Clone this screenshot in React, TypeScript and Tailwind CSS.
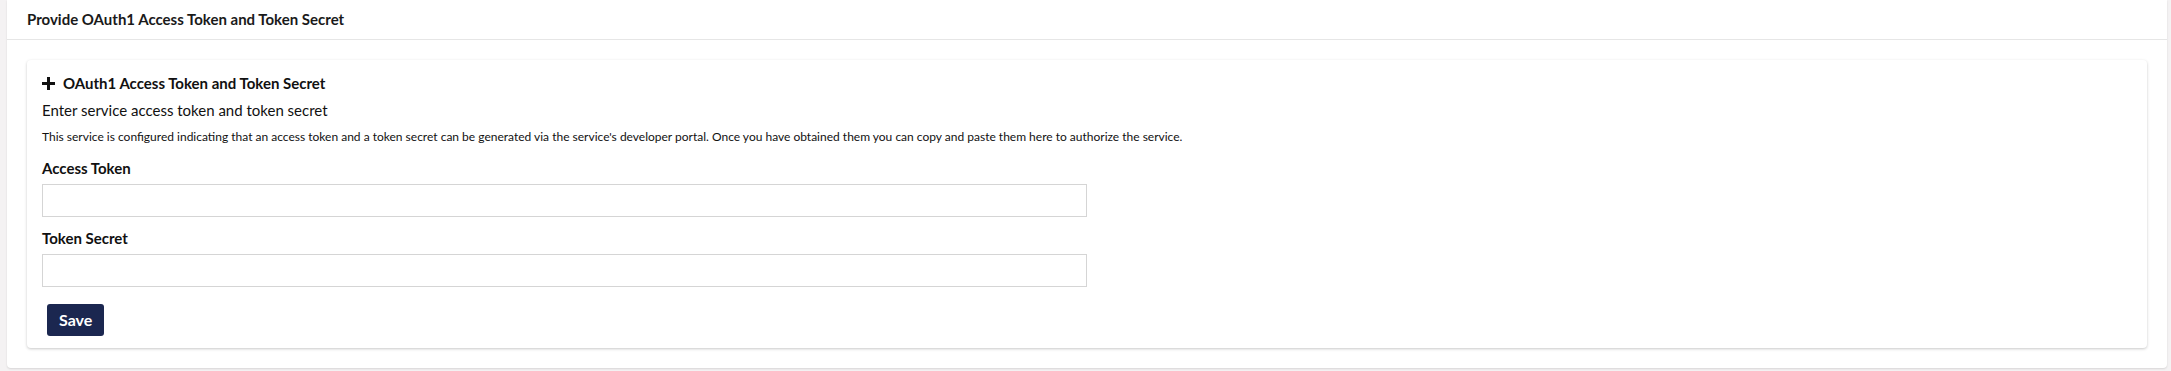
import React from "react";

export default function App() {
  return (
    <div className="min-h-[371px] w-full bg-[#f4f2f3] pl-[7px] pr-[4px] pb-[3px] font-['Lato','Noto_Sans',sans-serif] text-[#111]">
      <div className="bg-white rounded-b-[4px] shadow-[0_1px_2px_rgba(0,0,0,0.12)] min-h-[368px]">
        <div className="h-[40px] border-b border-[#e6e6e6] px-[20px] flex items-center">
          <h1 className="text-[15px] font-bold text-[#1a1a1a]">Provide OAuth1 Access Token and Token Secret</h1>
        </div>
        <div className="px-[20px] pt-[20px] pb-[20px]">
          <div className="rounded-[4px] bg-white shadow-[0_1px_3px_rgba(0,0,0,0.22)] px-[15px] pt-[12px] pb-[12px]">
            <div className="flex items-center gap-[8px] h-[22px]">
              <svg width="13" height="13" viewBox="0 0 13 13" className="shrink-0">
                <rect x="5" y="0" width="3" height="13" fill="#111" />
                <rect x="0" y="5" width="13" height="3" fill="#111" />
              </svg>
              <span className="text-[15px] font-bold">OAuth1 Access Token and Token Secret</span>
            </div>
            <p className="text-[15px] mt-[5px] leading-[22px]">Enter service access token and token secret</p>
            <p className="text-[12px] mt-[8px] leading-[16px]">
              This service is configured indicating that an access token and a token secret can be generated via the service's developer portal. Once you have obtained them you can copy and paste them here to authorize the service.
            </p>
            <label className="block text-[15px] font-bold mt-[12px] leading-[22px]">Access Token</label>
            <input className="block w-1/2 h-[33px] mt-[5px] border border-[#d5d5d5] bg-white outline-none" />
            <label className="block text-[15px] font-bold mt-[10px] leading-[22px]">Token Secret</label>
            <input className="block w-1/2 h-[33px] mt-[5px] border border-[#d5d5d5] bg-white outline-none" />
            <button className="mt-[17px] ml-[5px] h-[32px] px-[12px] rounded-[3px] bg-[#1b2750] text-white text-[16px] font-bold">Save</button>
          </div>
        </div>
      </div>
    </div>
  );
}
